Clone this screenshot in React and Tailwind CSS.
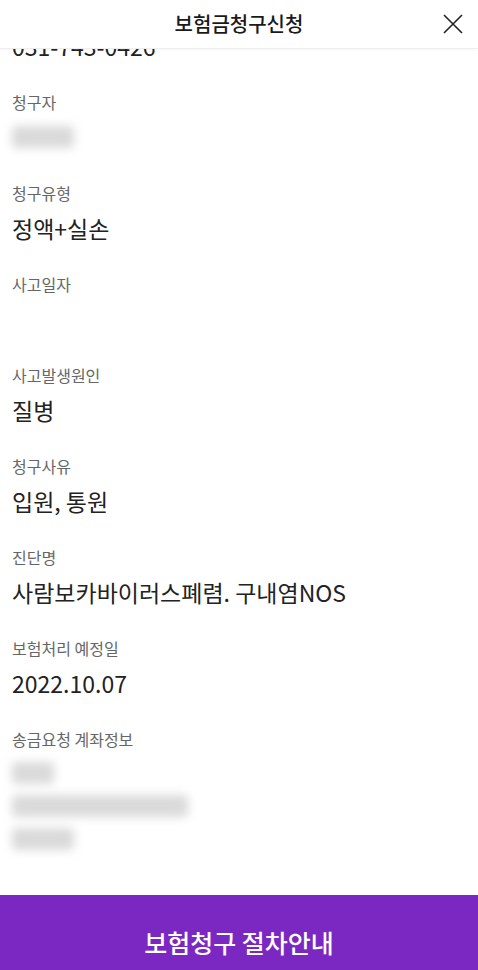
import React from "react";

function Row({ label, children }) {
  return (
    <div className="pb-[27px]">
      <div className="text-[16px] leading-[26px] text-[#666666]">{label}</div>
      <div className="mt-[6px] min-h-[32px] text-[23px] leading-[32px] text-[#222222]">{children}</div>
    </div>
  );
}

function Blob({ w }) {
  return <div className={`h-[22px] rounded-[4px] bg-[#dadada] blur-[5px] ${w}`} />;
}

export default function App() {
  return (
    <div className="flex h-[970px] w-full flex-col bg-white font-['Noto_Sans_CJK_KR','Noto_Sans',sans-serif]">
      <header className="relative z-10 flex h-[49px] shrink-0 items-center justify-center border-b border-[#eeeeee] bg-white shadow-[0_1px_3px_rgba(0,0,0,0.04)]">
        <h1 className="text-[20px] font-medium leading-[26px] text-[#1a1a1a]">보험금청구신청</h1>
        <div className="absolute right-[13px] top-[12px] flex h-[24px] w-[24px] items-center justify-center">
          <svg width="22" height="22" viewBox="0 0 22 22" fill="none">
            <path d="M2 2L20 20M20 2L2 20" stroke="#222" strokeWidth="1.6" />
          </svg>
        </div>
      </header>
      <main className="flex-1 overflow-hidden px-[12px]">
        <div className="mt-[-19px] pb-[27px]">
          <div className="h-[32px] text-[23px] leading-[32px] text-[#222222]">031-743-0426</div>
        </div>
        <Row label="청구자">
          <div className="flex h-[32px] items-center">
            <Blob w="w-[62px]" />
          </div>
        </Row>
        <Row label="청구유형">정액+실손</Row>
        <Row label="사고일자"></Row>
        <Row label="사고발생원인">질병</Row>
        <Row label="청구사유">입원, 통원</Row>
        <Row label="진단명">사람보카바이러스폐렴. 구내염NOS</Row>
        <Row label="보험처리 예정일">2022.10.07</Row>
        <div>
          <div className="text-[16px] leading-[26px] text-[#666666]">송금요청 계좌정보</div>
          <div className="mt-[10px] flex flex-col gap-[11px]">
            <Blob w="w-[42px]" />
            <Blob w="w-[176px]" />
            <Blob w="w-[62px]" />
          </div>
        </div>
      </main>
      <div className="h-[75px] shrink-0 bg-[#7b28c2] pt-[32px] text-center text-[25px] font-medium leading-[30px] text-white">
        보험청구 절차안내
      </div>
    </div>
  );
}
